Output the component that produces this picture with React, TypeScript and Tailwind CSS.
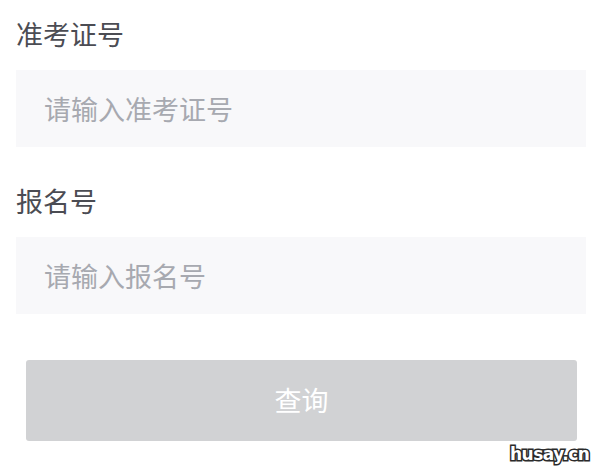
import React from "react";

const cjk = "font-['Noto_Sans_CJK_SC','Noto_Sans',sans-serif]";

function Field({ label, placeholder, first }: { label: string; placeholder: string; first?: boolean }) {
  return (
    <div className={first ? "pt-[14px]" : "pt-[34px]"}>
      <div className="h-[40px] text-[27px] leading-[40px] text-[#4b4c53]">{label}</div>
      <div className="mt-[16px] flex h-[77px] items-center bg-[#f8f8fa] pl-[28px]">
        <span className="text-[27px] leading-none text-[#a7a9b0]">{placeholder}</span>
      </div>
    </div>
  );
}

export default function App() {
  return (
    <div className={`relative h-[470px] w-[602px] overflow-hidden bg-white ${cjk}`}>
      <div className="ml-[16px] w-[570px]">
        <Field label="准考证号" placeholder="请输入准考证号" first />
        <Field label="报名号" placeholder="请输入报名号" />
        <button className="mx-[10px] mt-[46px] flex h-[81px] w-[551px] items-center justify-center rounded-[3px] bg-[#d1d2d4] text-[27px] text-white">
          查询
        </button>
      </div>
      <div className="absolute left-[510px] top-[442px] font-['DejaVu_Sans',sans-serif] text-[17px] font-bold tracking-[-0.5px] text-white [-webkit-text-stroke:3px_#2a2a2a] [paint-order:stroke_fill]">
        husay.cn
      </div>
    </div>
  );
}
